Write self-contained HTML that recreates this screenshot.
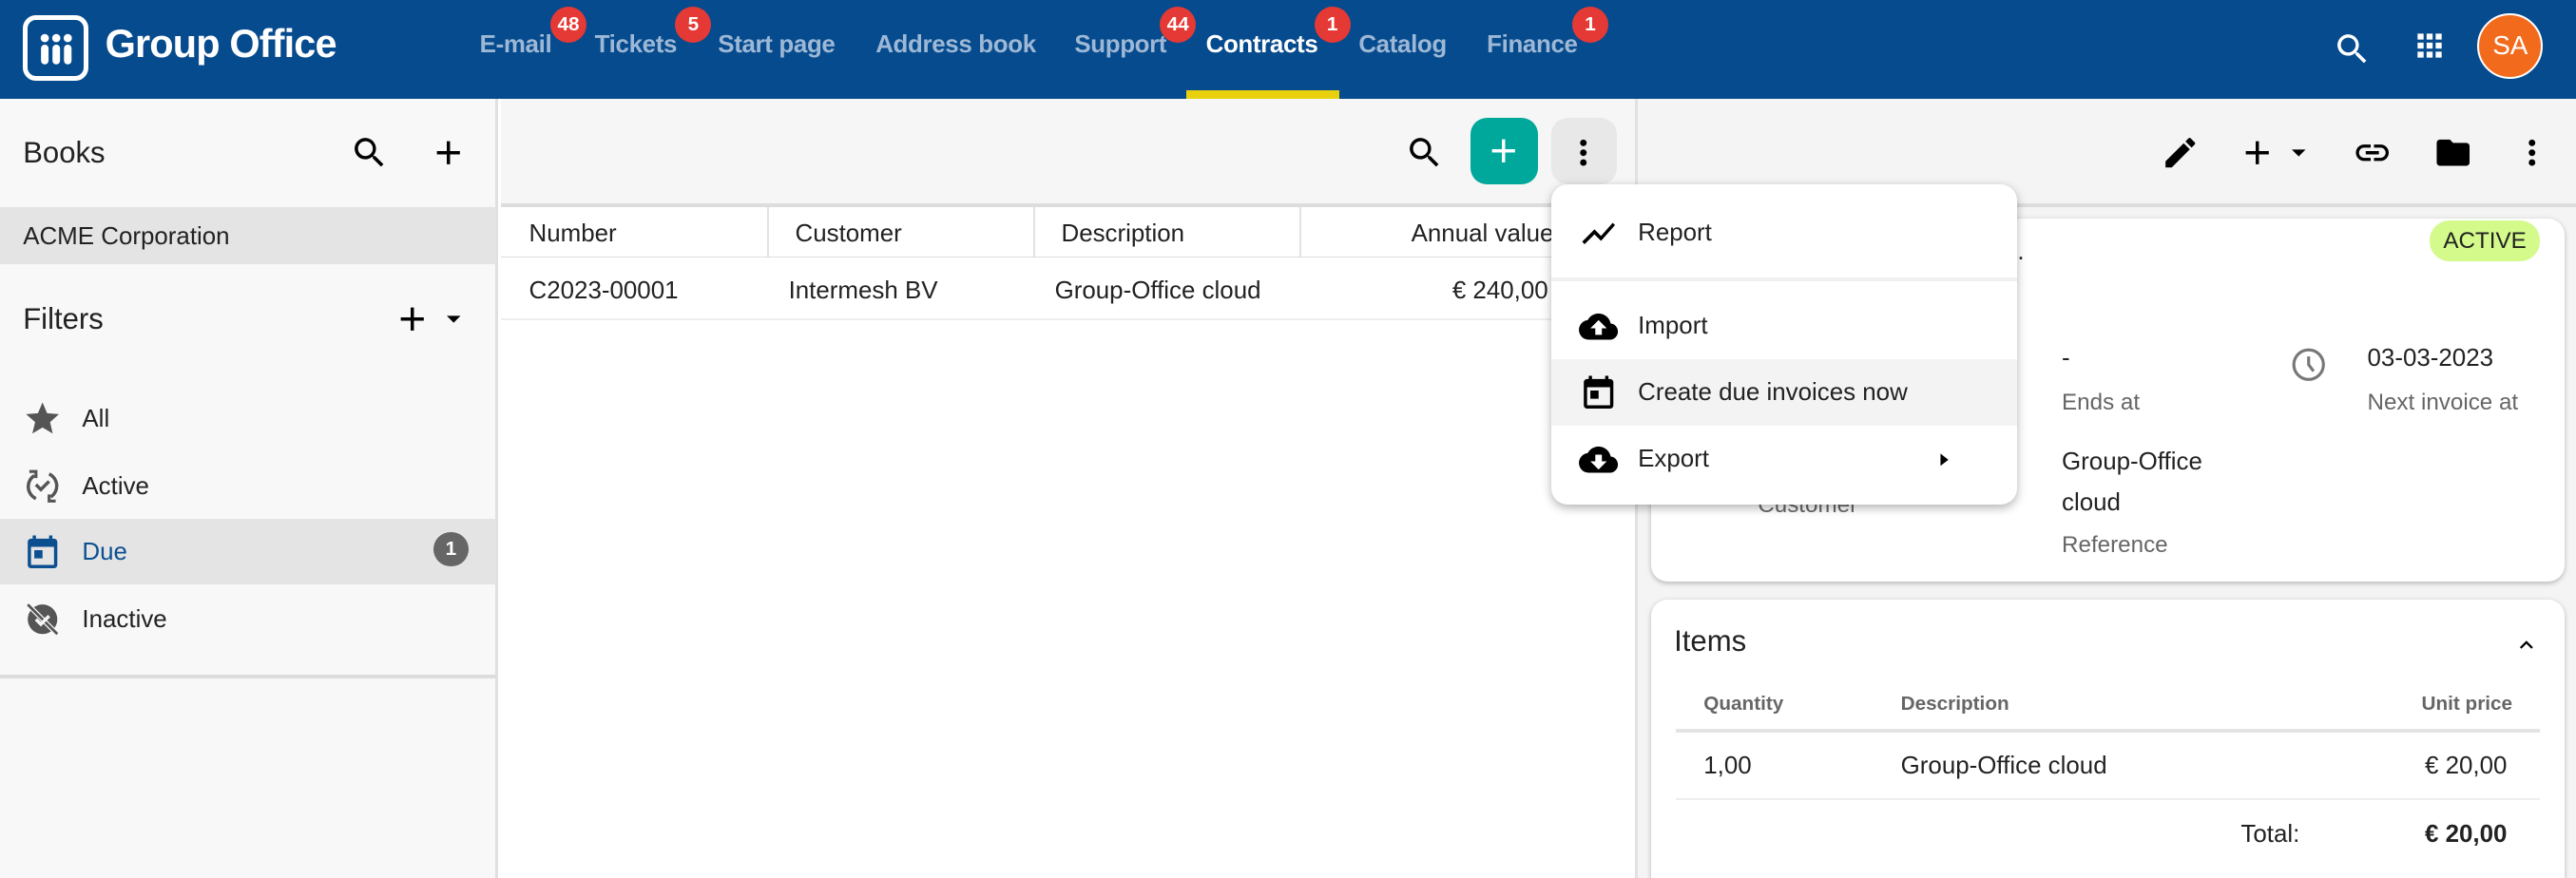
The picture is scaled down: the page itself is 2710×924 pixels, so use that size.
<!DOCTYPE html>
<html><head><meta charset="utf-8"><style>
*{box-sizing:border-box;margin:0;padding:0}
html,body{width:2710px;height:924px;overflow:hidden;background:#fff}
#r{zoom:1.72832;width:1568px;height:535px;position:relative;font-family:"Liberation Sans",sans-serif;font-size:15px;color:#222;overflow:hidden}
.a{position:absolute;white-space:nowrap}
.hdr{left:0;top:0;width:1568px;height:60px;background:#064b8d}
.nav{top:19px;font-size:15px;color:#9db8d6;font-weight:bold;letter-spacing:-0.2px}
.bdg{width:22px;height:22px;border-radius:11px;background:#e53935;color:#fff;font-size:12px;font-weight:bold;text-align:center;line-height:22px;top:4px}
.mi{left:0;width:284px;height:40px;display:flex;align-items:center;padding-left:17px}
.mi span{margin-left:12px}
.gray{color:#666}
</style></head><body><div id="r">
<div class="a hdr"></div>
<div class="a" style="left:14px;top:9px;width:40px;height:40px;border:3px solid #fff;border-radius:8px"></div>
<svg class="a" style="left:20px;top:16px" width="28" height="28" viewBox="0 0 28 28" fill="#fff"><circle cx="7" cy="7" r="2.5"/><circle cx="14" cy="7" r="2.5"/><circle cx="21" cy="7" r="2.5"/><rect x="4.7" y="11" width="4.6" height="12" rx="2.3"/><rect x="11.7" y="11" width="4.6" height="12" rx="2.3"/><rect x="18.7" y="11" width="4.6" height="12" rx="2.3"/></svg>
<div class="a" style="left:64px;top:13px;color:#fff;font-size:24px;font-weight:bold;letter-spacing:-0.5px">Group Office</div>
<div class="a nav" style="left:292px">E-mail</div>
<div class="a nav" style="left:362px">Tickets</div>
<div class="a nav" style="left:437px">Start page</div>
<div class="a nav" style="left:533px">Address book</div>
<div class="a nav" style="left:654px">Support</div>
<div class="a nav" style="left:734px;color:#fff">Contracts</div>
<div class="a nav" style="left:827px">Catalog</div>
<div class="a nav" style="left:905px">Finance</div>
<div class="a bdg" style="left:335px">48</div>
<div class="a bdg" style="left:411px">5</div>
<div class="a bdg" style="left:706px">44</div>
<div class="a bdg" style="left:800px">1</div>
<div class="a bdg" style="left:957px">1</div>
<div class="a" style="left:722px;top:55px;width:93px;height:5px;background:#e8d10c"></div>
<svg class="a" style="left:1420px;top:18px" width="24" height="24" viewBox="0 0 24 24" fill="#fff"><path d="M15.5 14h-.8l-.3-.3A6.5 6.5 0 1 0 9.5 16a6.5 6.5 0 0 0 4.2-1.6l.3.3v.8l5 5 1.5-1.5-5-5zm-6 0A4.5 4.5 0 1 1 14 9.5 4.5 4.5 0 0 1 9.5 14z"/></svg>
<svg class="a" style="left:1468px;top:17px" width="22" height="22" viewBox="0 0 24 24" fill="#fff"><path d="M4 8h4V4H4v4zm6 12h4v-4h-4v4zm-6 0h4v-4H4v4zm0-6h4v-4H4v4zm6 0h4v-4h-4v4zm6-10v4h4V4h-4zm-6 4h4V4h-4v4zm6 6h4v-4h-4v4zm0 6h4v-4h-4v4z"/></svg>
<div class="a" style="left:1508px;top:8px;width:40px;height:40px;border-radius:20px;background:#f26b1d;border:1.5px solid #fff;color:#fff;font-size:16px;text-align:center;line-height:37px">SA</div>

<div class="a" style="left:0;top:60px;width:303px;height:475px;background:#f8f8f8;border-right:2px solid #e0e0e0"></div>
<div class="a" style="left:14px;top:83px;font-size:18px">Books</div>
<svg class="a" style="left:213px;top:81px" width="24" height="24" viewBox="0 0 24 24"><path d="M15.5 14h-.8l-.3-.3A6.5 6.5 0 1 0 9.5 16a6.5 6.5 0 0 0 4.2-1.6l.3.3v.8l5 5 1.5-1.5-5-5zm-6 0A4.5 4.5 0 1 1 14 9.5 4.5 4.5 0 0 1 9.5 14z"/></svg>
<svg class="a" style="left:261px;top:81px" width="24" height="24" viewBox="0 0 24 24"><path d="M19 13h-6v6h-2v-6H5v-2h6V5h2v6h6v2z"/></svg>
<div class="a" style="left:0;top:126px;width:302px;height:35px;background:#e4e4e4"></div>
<div class="a" style="left:14px;top:136px">ACME Corporation</div>
<div class="a" style="left:14px;top:184px;font-size:18px">Filters</div>
<svg class="a" style="left:239px;top:182px" width="24" height="24" viewBox="0 0 24 24"><path d="M19 13h-6v6h-2v-6H5v-2h6V5h2v6h6v2z"/></svg>
<svg class="a" style="left:266px;top:184px" width="20" height="20" viewBox="0 0 24 24"><path d="M7 10l5 5 5-5z"/></svg>
<svg class="a" style="left:14px;top:243px" width="24" height="24" viewBox="0 0 24 24" fill="#555"><path d="M12 17.3L18.2 21l-1.6-7L22 9.2l-7.2-.6L12 2 9.2 8.6 2 9.2 7.5 14l-1.7 7z"/></svg>
<div class="a" style="left:50px;top:247px">All</div>
<svg class="a" style="left:14px;top:284px" width="24" height="24" viewBox="0 0 24 24" fill="none" stroke="#555" stroke-width="2"><path d="M7 5.5A8 8 0 0 0 8 19.5M17 18.5A8 8 0 0 0 16 4.5"/><path d="M8 9l3 3 5-5" transform="translate(0,2)"/><path d="M4 3h4v4M20 21h-4v-4" stroke-width="1.8"/></svg>
<div class="a" style="left:50px;top:288px">Active</div>
<div class="a" style="left:0;top:316px;width:302px;height:40px;background:#e4e4e4"></div>
<svg class="a" style="left:14px;top:324px" width="24" height="24" viewBox="0 0 24 24" fill="#0b4f91"><path d="M19 4h-1V2h-2v2H8V2H6v2H5a2 2 0 0 0-2 2v14a2 2 0 0 0 2 2h14a2 2 0 0 0 2-2V6a2 2 0 0 0-2-2zm0 16H5V9h14v11zM7 11h5v5H7z"/></svg>
<div class="a" style="left:50px;top:328px;color:#0b4f91">Due</div>
<div class="a" style="left:264px;top:324px;width:21px;height:21px;border-radius:11px;background:#666;color:#fff;font-size:12px;font-weight:bold;text-align:center;line-height:21px">1</div>
<svg class="a" style="left:14px;top:365px" width="24" height="24" viewBox="0 0 24 24"><circle cx="12" cy="12" r="9" fill="#555"/><path d="M2 2l20 20" stroke="#f8f8f8" stroke-width="3"/><path d="M3 3l18 18" stroke="#555" stroke-width="1.6"/><path d="M8 12l3 3 5-5" stroke="#f8f8f8" stroke-width="2" fill="none"/></svg>
<div class="a" style="left:50px;top:369px">Inactive</div>
<div class="a" style="left:0;top:411px;width:302px;height:2px;background:#ddd"></div>

<div class="a" style="left:305px;top:60px;width:690px;height:64px;background:#f6f6f6"></div>
<div class="a" style="left:995px;top:60px;width:2px;height:475px;background:#e2e2e2"></div>
<svg class="a" style="left:855px;top:81px" width="24" height="24" viewBox="0 0 24 24"><path d="M15.5 14h-.8l-.3-.3A6.5 6.5 0 1 0 9.5 16a6.5 6.5 0 0 0 4.2-1.6l.3.3v.8l5 5 1.5-1.5-5-5zm-6 0A4.5 4.5 0 1 1 14 9.5 4.5 4.5 0 0 1 9.5 14z"/></svg>
<div class="a" style="left:895px;top:72px;width:41px;height:40px;border-radius:10px;background:#00a89c"></div>
<svg class="a" style="left:903px;top:80px" width="24" height="24" viewBox="0 0 24 24" fill="#fff"><path d="M19 13h-6v6h-2v-6H5v-2h6V5h2v6h6v2z"/></svg>
<div class="a" style="left:944px;top:72px;width:40px;height:40px;border-radius:10px;background:#e8e8e8"></div>
<svg class="a" style="left:952px;top:81px" width="24" height="24" viewBox="0 0 24 24"><circle cx="12" cy="6" r="2"/><circle cx="12" cy="12" r="2"/><circle cx="12" cy="18" r="2"/></svg>
<div class="a" style="left:305px;top:124px;width:690px;height:2px;background:#ddd"></div>
<div class="a" style="left:305px;top:156px;width:690px;height:1px;background:#ddd"></div>
<div class="a" style="left:305px;top:194px;width:690px;height:1px;background:#eee"></div>
<div class="a" style="left:467px;top:126px;width:1px;height:30px;background:#e2e2e2"></div>
<div class="a" style="left:629px;top:126px;width:1px;height:30px;background:#e2e2e2"></div>
<div class="a" style="left:791px;top:126px;width:1px;height:30px;background:#e2e2e2"></div>
<div class="a" style="left:322px;top:134px">Number</div>
<div class="a" style="left:484px;top:134px">Customer</div>
<div class="a" style="left:646px;top:134px">Description</div>
<div class="a" style="left:859px;top:134px">Annual value</div>
<div class="a" style="left:322px;top:169px">C2023-00001</div>
<div class="a" style="left:480px;top:169px">Intermesh BV</div>
<div class="a" style="left:642px;top:169px">Group-Office cloud</div>
<div class="a" style="left:884px;top:169px">€ 240,00</div>

<div class="a" style="left:997px;top:60px;width:571px;height:475px;background:#f4f4f4"></div>
<div class="a" style="left:997px;top:124px;width:571px;height:2px;background:#ddd"></div>
<svg class="a" style="left:1315px;top:81px" width="24" height="24" viewBox="0 0 24 24"><path d="M3 17.25V21h3.75L17.8 9.94l-3.75-3.75zM20.7 7.04a1 1 0 0 0 0-1.41l-2.340-2.34a1 1 0 0 0-1.41 0l-1.83 1.83 3.75 3.75z"/></svg>
<svg class="a" style="left:1362px;top:81px" width="24" height="24" viewBox="0 0 24 24"><path d="M19 13h-6v6h-2v-6H5v-2h6V5h2v6h6v2z"/></svg>
<svg class="a" style="left:1389px;top:83px" width="20" height="20" viewBox="0 0 24 24"><path d="M7 10l5 5 5-5z"/></svg>
<svg class="a" style="left:1432px;top:81px" width="24" height="24" viewBox="0 0 24 24"><path d="M3.9 12c0-1.7 1.4-3.1 3.1-3.1h4V7H7a5 5 0 0 0 0 10h4v-1.9H7c-1.7 0-3.1-1.4-3.1-3.1zM8 13h8v-2H8v2zm9-6h-4v1.9h4c1.7 0 3.1 1.4 3.1 3.1s-1.4 3.1-3.1 3.1h-4V17h4a5 5 0 0 0 0-10z"/></svg>
<svg class="a" style="left:1481px;top:81px" width="24" height="24" viewBox="0 0 24 24"><path d="M10 4H4a2 2 0 0 0-2 2v12a2 2 0 0 0 2 2h16a2 2 0 0 0 2-2V8a2 2 0 0 0-2-2h-8l-2-2z"/></svg>
<svg class="a" style="left:1529px;top:81px" width="24" height="24" viewBox="0 0 24 24"><circle cx="12" cy="6" r="2"/><circle cx="12" cy="12" r="2"/><circle cx="12" cy="18" r="2"/></svg>

<div class="a" style="left:1005px;top:133px;width:556px;height:221px;background:#fff;border-radius:10px;box-shadow:0 1px 3px rgba(0,0,0,.25)"></div>
<div class="a" style="left:1479px;top:134px;width:67px;height:25px;border-radius:12px;background:#d4fa8c;font-size:14px;text-align:center;line-height:25px">ACTIVE</div>
<div class="a" style="left:1228px;top:145px">.</div>
<div class="a" style="left:1255px;top:210px">-</div>
<div class="a gray" style="left:1255px;top:237px;font-size:14px">Ends at</div>
<svg class="a" style="left:1393px;top:210px" width="24" height="24" viewBox="0 0 24 24" fill="none" stroke="#777" stroke-width="1.8"><circle cx="12" cy="12" r="9"/><path d="M12 7v5l3 4"/></svg>
<div class="a" style="left:1441px;top:210px">03-03-2023</div>
<div class="a gray" style="left:1441px;top:237px;font-size:14px">Next invoice at</div>
<div class="a" style="left:1255px;top:273px">Group-Office</div>
<div class="a" style="left:1255px;top:298px">cloud</div>
<div class="a gray" style="left:1255px;top:324px;font-size:14px">Reference</div>
<div class="a gray" style="left:1070px;top:300px;font-size:14px">Customer</div>

<div class="a" style="left:1005px;top:365px;width:556px;height:180px;background:#fff;border-radius:10px;box-shadow:0 1px 3px rgba(0,0,0,.25)"></div>
<div class="a" style="left:1019px;top:380px;font-size:18px">Items</div>
<svg class="a" style="left:1530px;top:385px" width="16" height="16" viewBox="0 0 24 24"><path d="M7.4 15.4L12 10.8l4.6 4.6L18 14l-6-6-6 6z"/></svg>
<div class="a gray" style="left:1037px;top:422px;font-size:12px;font-weight:bold">Quantity</div>
<div class="a gray" style="left:1157px;top:422px;font-size:12px;font-weight:bold">Description</div>
<div class="a gray" style="left:1474px;top:422px;font-size:12px;font-weight:bold">Unit price</div>
<div class="a" style="left:1020px;top:444px;width:526px;height:2px;background:#e4e4e4"></div>
<div class="a" style="left:1037px;top:458px">1,00</div>
<div class="a" style="left:1157px;top:458px">Group-Office cloud</div>
<div class="a" style="left:1476px;top:458px">€ 20,00</div>
<div class="a" style="left:1020px;top:486px;width:526px;height:1px;background:#eee"></div>
<div class="a" style="left:1364px;top:500px">Total:</div>
<div class="a" style="left:1476px;top:500px;font-weight:bold">€ 20,00</div>

<div class="a" style="left:944px;top:112px;width:284px;height:195px;background:#fff;border-radius:10px;box-shadow:0 2px 6px rgba(0,0,0,.3);overflow:hidden">
<div class="a mi" style="top:10px"><svg width="24" height="24" viewBox="0 0 24 24"><path d="M3.5 18.5l6-6 4 4L22 6.9 20.6 5.5l-7.1 8-4-4L2 16.99z"/></svg><span>Report</span></div>
<div class="a" style="left:0;top:57px;width:284px;height:2px;background:#f0f0f0"></div>
<div class="a mi" style="top:67px"><svg width="24" height="24" viewBox="0 0 24 24"><path d="M19.35 10.04A7.5 7.5 0 0 0 5.35 8.04 6 6 0 0 0 6 20h13a5 5 0 0 0 .35-9.96zM14 13v4h-4v-4H7l5-5 5 5h-3z"/></svg><span>Import</span></div>
<div class="a mi" style="top:107px;background:#f3f3f3"><svg width="24" height="24" viewBox="0 0 24 24"><path d="M19 4h-1V2h-2v2H8V2H6v2H5a2 2 0 0 0-2 2v14a2 2 0 0 0 2 2h14a2 2 0 0 0 2-2V6a2 2 0 0 0-2-2zm0 16H5V9h14v11zM7 11h5v5H7z"/></svg><span>Create due invoices now</span></div>
<div class="a mi" style="top:148px"><svg width="24" height="24" viewBox="0 0 24 24"><path d="M19.35 10.04A7.5 7.5 0 0 0 5.35 8.04 6 6 0 0 0 6 20h13a5 5 0 0 0 .35-9.96zM17 13l-5 5-5-5h3V9h4v4h3z"/></svg><span>Export</span></div>
<svg class="a" style="left:230px;top:160px" width="16" height="16" viewBox="0 0 24 24"><path d="M8 5v14l9-7z" transform="translate(2,0) scale(0.8) translate(3,3)"/></svg>
</div>
</div></body></html>
